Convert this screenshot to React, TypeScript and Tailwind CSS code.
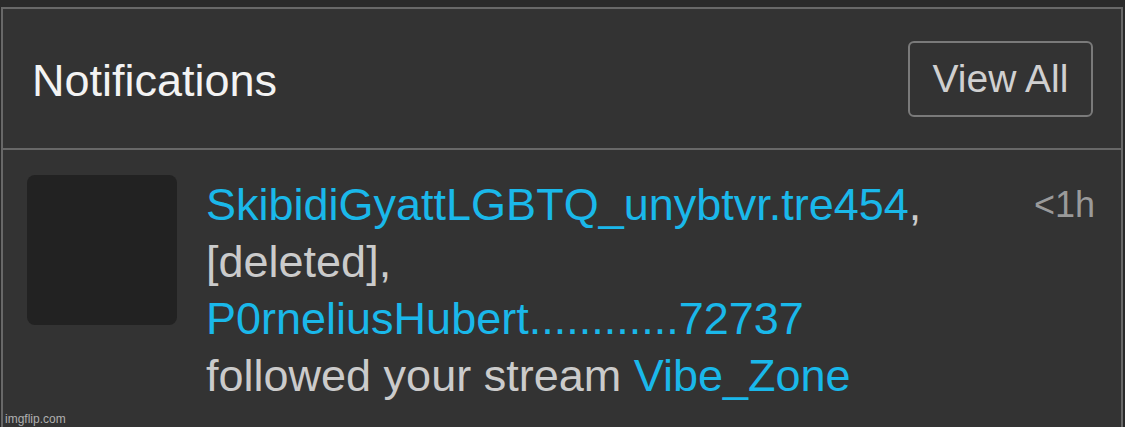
import React from "react";

export default function App() {
  const blue = "text-[#1ab8ea]";
  return (
    <div
      className="relative w-[1125px] h-[427px] overflow-hidden bg-[#2a2a2a] pt-[7px] pl-[1px] pr-[2px]"
      style={{ fontFamily: '"Liberation Sans", Arial, Helvetica, sans-serif' }}
    >
      <div className="h-full border-2 border-b-0 border-[#686868] bg-[#333333] flex flex-col">
        <div className="h-[139px] flex items-center justify-between pl-[29px] pr-[28px] shrink-0">
          <div className="text-[45px] leading-none text-[#f3f3f3] mt-[3px]">Notifications</div>
          <div className="w-[185px] h-[76px] border-2 border-[#7a7a7a] rounded-[6px] flex items-center justify-center text-[39px] leading-none text-[#d0d0d0] pb-[1px]">
            View All
          </div>
        </div>
        <div className="h-[2px] bg-[#686868] shrink-0" />
        <div className="flex items-start pt-[25px] pl-[24px] pr-[26px]">
          <div className="w-[150px] h-[150px] rounded-[8px] bg-[#222222] shrink-0" />
          <div className="ml-[29px] mt-[1px] flex-1 text-[45px] leading-[57px] text-[#cbcbcb] whitespace-nowrap">
            <div>
              <span className={blue}>SkibidiGyattLGBTQ_unybtvr.tre454</span>,
            </div>
            <div>[deleted],</div>
            <div className={blue}>P0rneliusHubert............72737</div>
            <div>
              followed your stream <span className={blue}>Vibe_Zone</span>
            </div>
          </div>
          <div className="mt-[1px] text-[36px] leading-[57px] text-[#9a9a9a]">&lt;1h</div>
        </div>
      </div>
      <div className="absolute left-[5px] bottom-[2px] text-[12px] leading-none text-[#b0b0b0]">imgflip.com</div>
    </div>
  );
}
